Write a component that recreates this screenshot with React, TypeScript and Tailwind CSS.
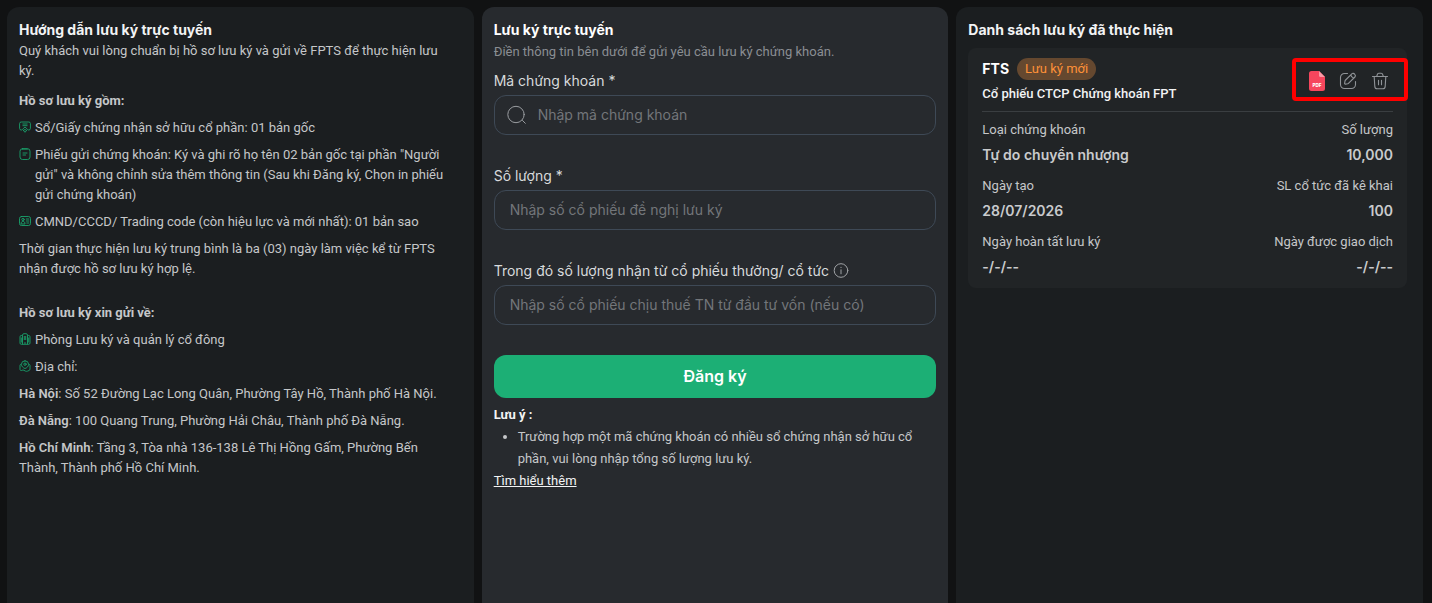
import type { ReactNode } from "react";

type IconProps = {
    className?: string;
};

function CertificateIcon({ className }: IconProps) {
    return (
        <svg className={className} viewBox="0 0 12 12" fill="none" stroke="currentColor" strokeLinejoin="round" strokeWidth="0.9" aria-hidden="true">
            <path d="M3 9H2.2A1.6 1.6 0 0 1 .6 7.4V2.6A1.6 1.6 0 0 1 2.2 1h7.6a1.6 1.6 0 0 1 1.6 1.6v4.800A1.6 1.6 0 0 1 9.8 9H9" />
            <path d="M3.5 3h5M3.5 4.7h5" />
            <path d="M6 6 8.500 8.300 6 11.300 3.500 8.300Z" />
            <path d="m5 8.300 1 .9 1-.9" />
        </svg>
    );
}

function NoteIcon({ className }: IconProps) {
    return (
        <svg className={className} viewBox="0 0 12 12" fill="none" stroke="currentColor" strokeLinecap="round" strokeWidth="0.9" aria-hidden="true">
            <rect x="1" y="0.7" width="10" height="10.8" rx="2.5" />
            <path d="M4 5h4M4 7h2.5M3.5 1.1h5" />
        </svg>
    );
}

function IdCardIcon({ className }: IconProps) {
    return (
        <svg className={className} viewBox="0 0 12 12" fill="none" stroke="currentColor" strokeLinecap="round" strokeWidth="0.9" aria-hidden="true">
            <rect x="0.5" y="1.5" width="11" height="9" rx="2" />
            <circle cx="4" cy="4.5" r="1.2" />
            <path d="M2 8.600c0-1.500.8-2.200 2-2.200s2 .7 2 2.200ZM7.300 4h2.500M7.300 6h2.500M7.800 8h2" />
        </svg>
    );
}

function BuildingIcon({ className }: IconProps) {
    return (
        <svg className={className} viewBox="0 0 12 12" fill="none" stroke="currentColor" strokeWidth="0.9" aria-hidden="true">
            <path d="M3.500 11.300V2.200A1.500 1.500 0 0 1 5 .7h2a1.500 1.500 0 0 1 1.500 1.500v9.100" />
            <path d="M3.500 2.500H2.300A1.300 1.300 0 0 0 1 3.800v6.200a1.300 1.300 0 0 0 1.300 1.300h7.400A1.300 1.300 0 0 0 11 10V3.800a1.300 1.300 0 0 0-1.300-1.300H8.500" />
            <path d="M5.300 3v4M6.700 3v4M2.300 4.500v5M9.700 4.500v5M6 9v2" />
        </svg>
    );
}

function MapPinIcon({ className }: IconProps) {
    return (
        <svg className={className} viewBox="0 0 12 12" fill="none" stroke="currentColor" strokeLinecap="round" strokeWidth="0.9" aria-hidden="true">
            <path d="M6 .8a3.600 3.600 0 0 1 3.600 3.500C9.600 6.500 7.500 8.200 6 8.500 4.500 8.200 2.400 6.500 2.400 4.300A3.600 3.600 0 0 1 6 .8Z" />
            <circle cx="6" cy="4.2" r="1.2" />
            <path d="M1.800 4.200C1 4.700 1 5 1 6v3.200c0 1.100.8 1.600 1.800 1.200L4 9.900l2.500 1.200c.8.3 1.200.3 2 0l1.500-.6c.8-.3 1-.7 1-1.600V5.500c0-.7-.3-1-.8-1.200" />
        </svg>
    );
}

function SearchIcon({ className }: IconProps) {
    return (
        <svg className={className} viewBox="0 0 20 20" fill="none" stroke="currentColor" strokeLinecap="round" aria-hidden="true">
            <circle cx="9" cy="9.5" r="8.2" />
            <path d="m15.500 15.500 2.800 2.800" />
        </svg>
    );
}

function InfoIcon({ className }: IconProps) {
    return (
        <svg className={className} viewBox="0 0 16 16" fill="none" stroke="currentColor" strokeLinecap="round" aria-hidden="true">
            <circle cx="8" cy="7.5" r="6.8" />
            <path d="M8 6.800v4M8 4.300v.3" />
        </svg>
    );
}

function PdfIcon() {
    return (
        <svg className="h-5 w-4" viewBox="0 0 16 20" aria-hidden="true">
            <path d="M2.500 0H10l6 6v11.500a2.500 2.500 0 0 1-2.500 2.500h-11A2.500 2.500 0 0 1 0 17.500v-15A2.500 2.500 0 0 1 2.500 0Z" fill="#f6465d" />
            <path d="M10 0v4.500A1.500 1.500 0 0 0 11.500 6H16Z" fill="#fb9aa6" />
            <text x="8" y="15.8" textAnchor="middle" fill="#fff" fontSize="4.6" fontWeight="800" fontFamily="Inter, sans-serif">
                PDF
            </text>
        </svg>
    );
}

function EditIcon() {
    return (
        <svg className="size-[18px]" viewBox="0 0 18 18" fill="none" stroke="currentColor" strokeLinecap="round" strokeLinejoin="round" strokeWidth="1.1" aria-hidden="true">
            <path d="M8.500 1.500H5.500A4 4 0 0 0 1.500 5.500v7a4 4 0 0 0 4 4h7a4 4 0 0 0 4-4V9.500" />
            <path d="m12.800 1.800-6.200 6.200c-.3.300-.5.700-.6 1.100l-.4 2.200c-.1.500.3.900.8.800l2.300-.4c.4-.1.700-.2 1-.5l6.200-6.200c1.700-1.700-1.400-4.900-3.100-3.200ZM11.700 3c.5 1.500 1.600 2.700 3.200 3.200" />
        </svg>
    );
}

function TrashIcon() {
    return (
        <svg className="size-[18px]" viewBox="0 0 18 18" fill="none" stroke="currentColor" strokeLinecap="round" strokeLinejoin="round" strokeWidth="1.1" aria-hidden="true">
            <path d="M1.500 4.500h15M5.800 4.200l.5-1.700c.2-.8.700-1.200 1.500-1.200h2.400c.8 0 1.300.4 1.500 1.200l.5 1.700" />
            <path d="m3.200 4.700.6 9.700c.1 1.600.8 2.400 2.400 2.400h5.600c1.600 0 2.300-.8 2.400-2.400l.6-9.700M7.500 8.200v4.500M10.500 8.200v4.500" />
        </svg>
    );
}

type GuideItemProps = {
    icon: ReactNode;
    children: ReactNode;
};

function GuideItem({ icon, children }: GuideItemProps) {
    return (
        <li className="flex items-start gap-1">
            <span className="shrink-0 pt-[3px] text-[#1aa36c]">{icon}</span>
            <span>{children}</span>
        </li>
    );
}

const addresses = [
    { city: "Hà Nội", text: "Số 52 Đường Lạc Long Quân, Phường Tây Hồ, Thành phố Hà Nội." },
    { city: "Đà Nẵng", text: "100 Quang Trung, Phường Hải Châu, Thành phố Đà Nẵng." },
    { city: "Hồ Chí Minh", text: "Tầng 3, Tòa nhà 136-138 Lê Thị Hồng Gấm, Phường Bến Thành, Thành phố Hồ Chí Minh." },
];

function GuidePanel() {
    return (
        <section className="rounded-t-xl bg-[#1b1e20] py-3 pr-5 pl-3 text-[#c5c7c9]">
            <h2 className="text-sm leading-[22px] font-bold text-[#f2f3f4]">Hướng dẫn lưu ký trực tuyến</h2>
            <div className="flex flex-col gap-[7px] font-['Roboto','Noto_Sans',sans-serif] text-[13px] leading-5">
                <p>Quý khách vui lòng chuẩn bị hồ sơ lưu ký và gửi về FPTS để thực hiện lưu ký.</p>
                <h3 className="mt-[3px] font-bold">Hồ sơ lưu ký gồm:</h3>
                <ul className="flex flex-col gap-[7px]">
                    <GuideItem icon={<CertificateIcon className="size-3" />}>
                        Sổ/Giấy chứng nhận sở hữu cổ phần: 01 bản gốc
                    </GuideItem>
                    <GuideItem icon={<NoteIcon className="size-3" />}>
                        Phiếu gửi chứng khoán: Ký và ghi rõ họ tên 02 bản gốc tại phần "Người gửi" và không
                        chỉnh sửa thêm thông tin (Sau khi Đăng ký, Chọn in phiếu gửi chứng khoán)
                    </GuideItem>
                    <GuideItem icon={<IdCardIcon className="size-3" />}>
                        CMND/CCCD/ Trading code (còn hiệu lực và mới nhất): 01 bản sao
                    </GuideItem>
                </ul>
                <p>
                    Thời gian thực hiện lưu ký trung bình là ba (03) ngày làm việc kể từ FPTS nhận được hồ sơ
                    lưu ký hợp lệ.
                </p>
                <h3 className="mt-[17px] font-bold">Hồ sơ lưu ký xin gửi về:</h3>
                <ul className="flex flex-col gap-[7px]">
                    <GuideItem icon={<BuildingIcon className="size-3" />}>Phòng Lưu ký và quản lý cổ đông</GuideItem>
                    <GuideItem icon={<MapPinIcon className="size-3" />}>Địa chỉ:</GuideItem>
                </ul>
                {addresses.map((address) => (
                    <p key={address.city}>
                        <b className="font-semibold">{address.city}</b>: {address.text}
                    </p>
                ))}
            </div>
        </section>
    );
}

type FieldProps = {
    id: string;
    label: string;
    placeholder: string;
    hint?: ReactNode;
    icon?: ReactNode;
};

function Field({ id, label, placeholder, hint, icon }: FieldProps) {
    return (
        <div className="flex flex-col gap-1">
            <div className="flex items-center gap-1 leading-5">
                <label htmlFor={id} className="text-sm leading-5 text-[#d8dadc]">
                    {label}
                </label>
                {hint}
            </div>
            <div className="flex h-10 items-center gap-2 rounded-xl border border-[#3e4956] px-3 text-[#9a9da1]">
                {icon}
                <input
                    id={id}
                    type="text"
                    placeholder={placeholder}
                    className="min-w-0 flex-1 bg-transparent pl-[3px] pr-1 text-sm text-white outline-none placeholder:text-[#73767a]"
                />
            </div>
        </div>
    );
}

function RegisterPanel() {
    return (
        <section className="rounded-t-xl bg-[#272a2e] p-3">
            <h2 className="text-sm leading-[22px] font-bold text-white">Lưu ký trực tuyến</h2>
            <p className="font-['Roboto','Noto_Sans',sans-serif] text-[13px] leading-[22px] text-[#8a8e93]">
                Điền thông tin bên dưới để gửi yêu cầu lưu ký chứng khoán.
            </p>
            <form className="mt-2" onSubmit={(event) => event.preventDefault()}>
                <div className="flex flex-col gap-[31px]">
                    <Field
                        id="symbol"
                        label="Mã chứng khoán *"
                        placeholder="Nhập mã chứng khoán"
                        icon={<SearchIcon className="size-5 shrink-0" />}
                    />
                    <Field id="quantity" label="Số lượng *" placeholder="Nhập số cổ phiếu đề nghị lưu ký" />
                    <Field
                        id="dividend"
                        label="Trong đó số lượng nhận từ cổ phiếu thưởng/ cổ tức"
                        placeholder="Nhập số cổ phiếu chịu thuế TN từ đầu tư vốn (nếu có)"
                        hint={<InfoIcon className="size-4 text-[#a0a3a6]" />}
                    />
                </div>
                <button type="submit" className="mt-[30px] h-[43px] w-full rounded-xl bg-[#1caf75] pb-0.5 text-base font-semibold text-white">
                    Đăng ký
                </button>
            </form>
            <div className="mt-1.5 font-['Roboto','Noto_Sans',sans-serif] text-[13px] leading-[22px] text-[#c5c7c9]">
                <p className="font-bold text-[#f2f3f4]">Lưu ý :</p>
                <ul className="list-disc pl-6">
                    <li>
                        Trường hợp một mã chứng khoán có nhiều sổ chứng nhận sở hữu cổ phần, vui lòng nhập tổng
                        số lượng lưu ký.
                    </li>
                </ul>
                <a href="#" className="block w-fit text-[#f2f3f4] underline">
                    Tìm hiểu thêm
                </a>
            </div>
        </section>
    );
}

const details = [
    { label: "Loại chứng khoán", value: "Tự do chuyển nhượng" },
    { label: "Số lượng", value: "10,000" },
    { label: "Ngày tạo", value: "28/07/2026" },
    { label: "SL cổ tức đã kê khai", value: "100" },
    { label: "Ngày hoàn tất lưu ký", value: "-/-/--" },
    { label: "Ngày được giao dịch", value: "-/-/--" },
];

function HistoryPanel() {
    return (
        <section className="rounded-t-xl bg-[#1b1e20] py-3 pr-4 pl-3">
            <h2 className="text-sm leading-[22px] font-bold text-[#f2f3f4]">Danh sách lưu ký đã thực hiện</h2>
            <article className="mt-[7px] rounded-lg bg-[#212426] px-[14px] pt-[10px] pb-2">
                <header className="flex items-start justify-between border-b border-[#3a3e41] pb-1.5">
                    <div>
                        <div className="flex items-center gap-2">
                            <h3 className="text-sm font-bold text-white">FTS</h3>
                            <span className="rounded-full bg-[#65482f] px-2 font-['Roboto','Noto_Sans',sans-serif] text-[13px] leading-[22px] text-[#ff9138]">
                                Lưu ký mới
                            </span>
                        </div>
                        <p className="mt-0.5 font-['Roboto','Noto_Sans',sans-serif] text-[13px] leading-[23px] font-medium text-[#f2f3f4]">
                            Cổ phiếu CTCP Chứng khoán FPT
                        </p>
                    </div>
                    <div className="-mr-[15px] flex h-[43px] w-[116px] items-center justify-center gap-[14px] rounded-sm border-4 border-[#ff0000] pt-0.5 pr-0.5 text-[#8f9397]">
                        <button type="button" aria-label="PDF">
                            <PdfIcon />
                        </button>
                        <button type="button" aria-label="Sửa">
                            <EditIcon />
                        </button>
                        <button type="button" aria-label="Xóa">
                            <TrashIcon />
                        </button>
                    </div>
                </header>
                <dl className="grid grid-cols-2 gap-y-1.5 pt-1.5">
                    {details.map((detail) => (
                        <div key={detail.label} className="even:text-right">
                            <dt className="font-['Roboto','Noto_Sans',sans-serif] text-[13px] leading-6 text-[#c5c7c9]">
                                {detail.label}
                            </dt>
                            <dd className="text-sm leading-[26px] font-semibold text-[#c9cbcd]">{detail.value}</dd>
                        </div>
                    ))}
                </dl>
            </article>
        </section>
    );
}

export default function App() {
    return (
        <main className="grid min-h-screen grid-cols-3 gap-2 bg-[#111213] pt-[7px] pr-[9px] pl-[7px] font-['Inter','Noto_Sans',sans-serif]">
            <GuidePanel />
            <RegisterPanel />
            <HistoryPanel />
        </main>
    );
}
